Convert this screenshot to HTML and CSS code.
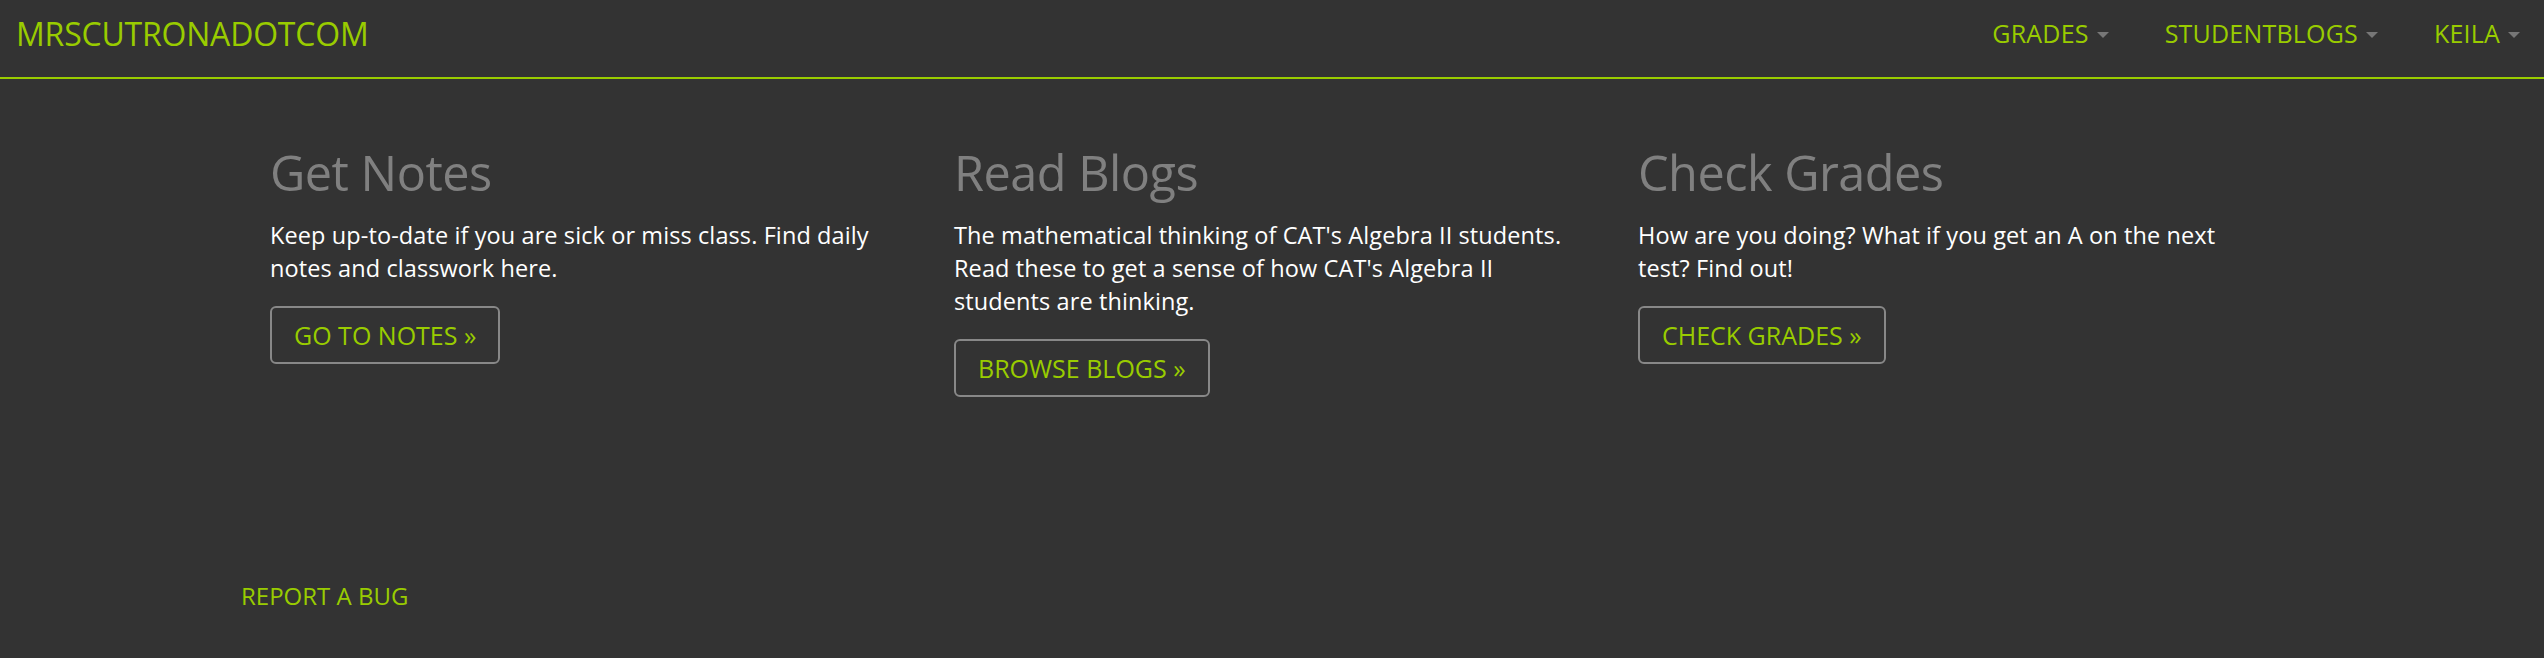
FILE: index.html
```html
<!DOCTYPE html>
<html lang="en">
<head>
<meta charset="utf-8">
<title>MRSCUTRONADOTCOM</title>
<link rel="stylesheet" href="styles.css">
</head>
<body>
<header class="navbar">
  <a class="brand" href="#">MRSCUTRONADOTCOM</a>
  <nav class="nav">
    <a class="nav-link" href="#">GRADES<span class="caret"></span></a>
    <a class="nav-link" href="#">STUDENTBLOGS<span class="caret"></span></a>
    <a class="nav-link" href="#">KEILA<span class="caret"></span></a>
  </nav>
</header>
<main class="container">
  <div class="row">
    <section class="col">
      <h2>Get Notes</h2>
      <p>Keep up-to-date if you are sick or miss class. Find daily notes and classwork here.</p>
      <a class="btn" href="#">GO TO NOTES &raquo;</a>
    </section>
    <section class="col">
      <h2>Read Blogs</h2>
      <p>The mathematical thinking of CAT's Algebra II students. Read these to get a sense of how CAT's Algebra II students are thinking.</p>
      <a class="btn" href="#">BROWSE BLOGS &raquo;</a>
    </section>
    <section class="col">
      <h2>Check Grades</h2>
      <p>How are you doing? What if you get an A on the next test? Find out!</p>
      <a class="btn" href="#">CHECK GRADES &raquo;</a>
    </section>
  </div>
</main>
<footer class="footer">
  <a class="bug" href="#">REPORT A BUG</a>
</footer>
</body>
</html>
```

FILE: styles.css
```css
html, body {
  margin: 0;
  padding: 0;
}

body {
  background: #333333;
  font-family: "Open Sans", "Noto Sans", sans-serif;
  color: #ffffff;
  min-height: 658px;
}

a {
  text-decoration: none;
  color: #99cc00;
}

.navbar {
  display: flex;
  justify-content: space-between;
  align-items: flex-start;
  height: 77px;
  border-bottom: 2px solid #99cc00;
}

.brand {
  font-size: 32px;
  line-height: 40px;
  padding: 14px 0 0 16px;
  letter-spacing: -0.2px;
}

.nav {
  display: flex;
}

.nav-link {
  display: flex;
  align-items: center;
  font-size: 25px;
  line-height: 40px;
  padding: 13px 24px 0 32px;
  letter-spacing: 0.2px;
}

.caret {
  display: inline-block;
  width: 0;
  height: 0;
  margin-left: 8px;
  margin-top: 4px;
  border-top: 6px solid #777777;
  border-left: 6px solid transparent;
  border-right: 6px solid transparent;
}

.container {
  width: 2052px;
  margin: 0 auto;
  padding-top: 67px;
}

.row {
  display: grid;
  grid-template-columns: repeat(3, 1fr);
}

.col {
  padding: 0 40px 0 24px;
}

h2 {
  margin: 0 0 20px;
  font-size: 48.6px;
  line-height: 1.1;
  font-weight: 400;
  color: #808080;
  letter-spacing: -0.5px;
}

p {
  margin: 0 0 21px;
  font-size: 23.5px;
  line-height: 33px;
  letter-spacing: 0.1px;
}

.btn {
  display: inline-block;
  font-size: 25px;
  line-height: 54px;
  padding: 0 22px;
  border: 2px solid #888888;
  border-radius: 6px;
  letter-spacing: 0;
}

.footer {
  width: 2062px;
  margin: 0 auto;
  padding-top: 182px;
}

.bug {
  font-size: 24px;
  line-height: 33px;
  letter-spacing: 0;
}
```
